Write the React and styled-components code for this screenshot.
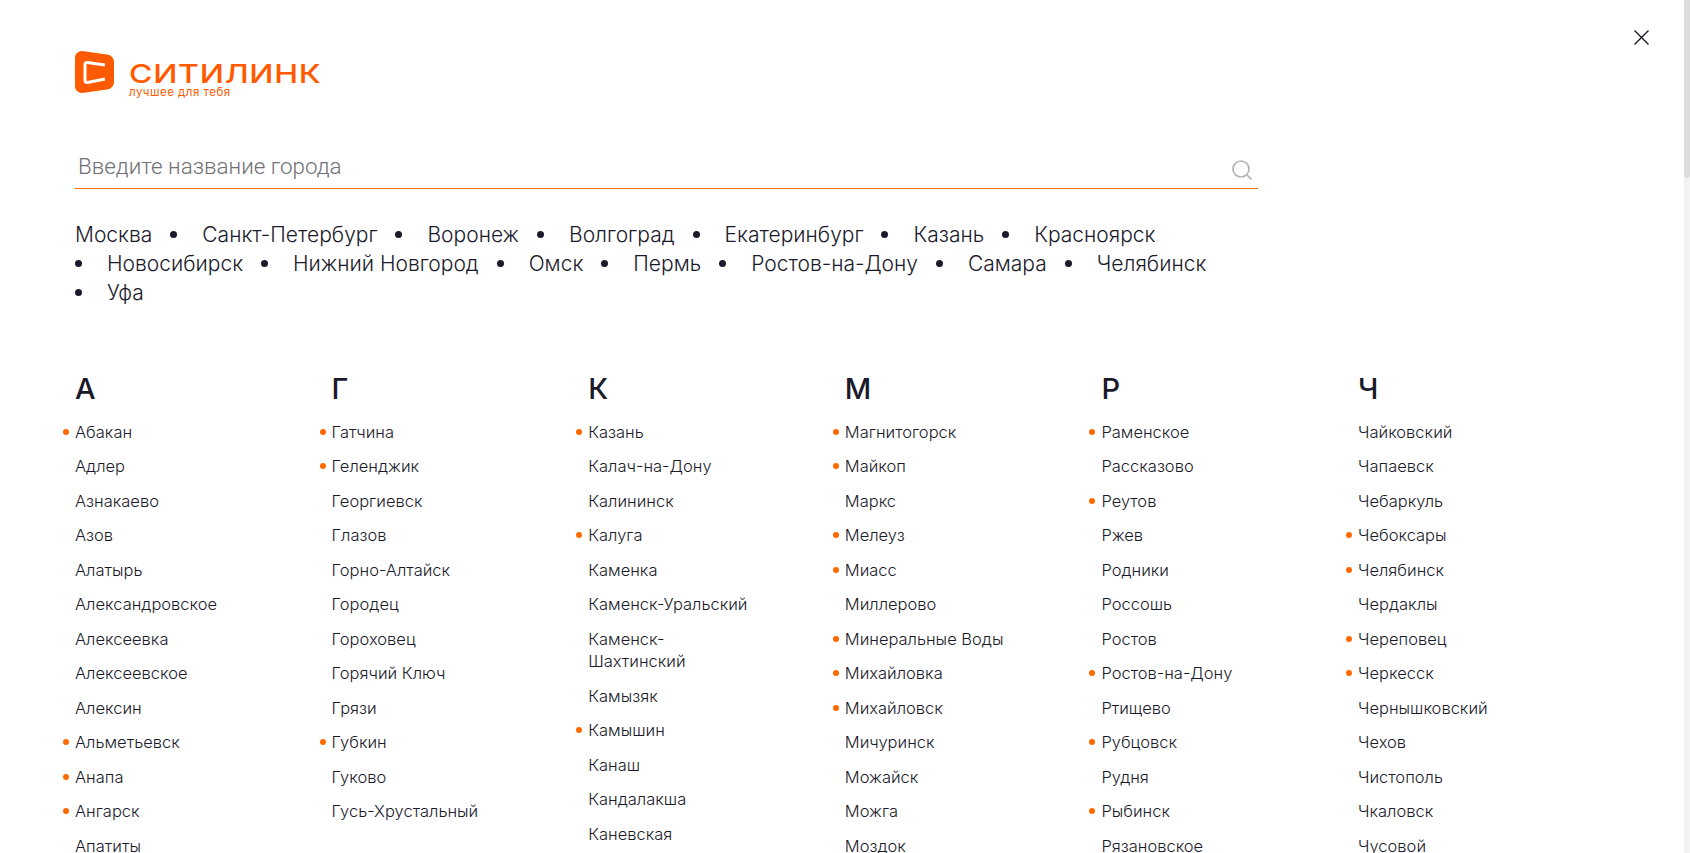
import React from "react";
import styled, { createGlobalStyle } from "styled-components";

const Global = createGlobalStyle`
  html { overflow: hidden; }
  body { margin: 0; background: #fff; color: #1a1a2b; font-family: Inter, "Noto Sans", sans-serif; font-weight: 300; }
`;

const Page = styled.div`
  position: relative;
  padding: 51px 0 0 75px;
  box-sizing: border-box;
`;
const ScrollTrack = styled.div`
  position: fixed;
  top: 0;
  right: 0;
  bottom: 0;
  width: 6px;
  background: #f3f3f3;
`;
const ScrollThumb = styled.div`
  height: 178px;
  border-radius: 0 0 3px 3px;
  background: #dcdcdc;
`;
const Close = styled.button`
  position: absolute;
  top: 30px;
  left: 1634px;
  width: 15px;
  height: 15px;
  padding: 0;
  border: 0;
  background: none;
  color: #1a1a2b;
  display: flex;
`;
const Logo = styled.div`
  display: flex;
  align-items: flex-start;
  gap: 15px;
  height: 42px;
  color: #ff5a00;
`;
const LogoWords = styled.div`
  display: flex;
  flex-direction: column;
  padding-top: 11px;
`;
const LogoName = styled.span`
  font-size: 26px;
  line-height: 24px;
  font-weight: 500;
  letter-spacing: 0.6px;
  transform: scaleX(1.23);
  transform-origin: left center;
  white-space: nowrap;
`;
const LogoTag = styled.span`
  font-size: 11.5px;
  line-height: 12px;
  font-weight: 400;
  letter-spacing: 0.5px;
  white-space: nowrap;
`;
const Search = styled.div`
  width: 1183px;
  height: 38px;
  margin-top: 57px;
  display: flex;
  align-items: center;
  justify-content: space-between;
  border-bottom: 1px solid #ff6a00;
`;
const SearchInput = styled.input`
  flex: 1;
  height: 38px;
  border: 0;
  outline: 0;
  padding: 0 0 6px 3px;
  background: none;
  font-family: Roboto, sans-serif;
  font-weight: 300;
  font-size: 22.4px;
  box-sizing: border-box;
  &::placeholder { color: #6f6f75; opacity: 1; }
`;
const SearchIcon = styled.svg`
  width: 22px;
  height: 22px;
  margin: 1px 5px 0 0;
  color: #b4b4b8;
`;
const Popular = styled.ul`
  width: 1183px;
  margin: 31px 0 0;
  padding: 0;
  list-style: none;
  display: flex;
  flex-wrap: wrap;
  column-gap: 18px;
  font-size: 21px;
  line-height: 29px;
`;
const PopularItem = styled.li`
  display: flex;
  align-items: center;
  white-space: nowrap;
  &:not(:first-child)::before {
    content: "";
    width: 7px;
    height: 7px;
    margin-right: 25px;
    border-radius: 50%;
    background: #1a1a2b;
  }
`;
const Columns = styled.div`
  display: grid;
  grid-template-columns: repeat(6, 256.6px);
  margin-top: 64px;
`;
const Column = styled.section``;
const Letter = styled.h2`
  margin: 0 0 13.6px;
  font-size: 29px;
  line-height: 36px;
  font-weight: 500;
`;
const Cities = styled.ul`
  width: 170px;
  margin: 0;
  padding: 0;
  list-style: none;
`;
const City = styled.li`
  position: relative;
  margin-bottom: 12px;
  font-size: 16.5px;
  line-height: 22.5px;
  &::before {
    content: "";
    display: ${(p) => (p.$major ? "block" : "none")};
    position: absolute;
    left: -12px;
    top: 8px;
    width: 6px;
    height: 6px;
    border-radius: 50%;
    background: #ff6a00;
  }
`;

const popular = ["Москва","Санкт-Петербург","Воронеж","Волгоград","Екатеринбург","Казань","Красноярск","Новосибирск","Нижний Новгород","Омск","Пермь","Ростов-на-Дону","Самара","Челябинск","Уфа"];

// A leading "*" marks a city with a store.
const columns = [
  ["А", ["*Абакан","Адлер","Азнакаево","Азов","Алатырь","Александровское","Алексеевка","Алексеевское","Алексин","*Альметьевск","*Анапа","*Ангарск","Апатиты"]],
  ["Г", ["*Гатчина","*Геленджик","Георгиевск","Глазов","Горно-Алтайск","Городец","Гороховец","Горячий Ключ","Грязи","*Губкин","Гуково","Гусь-Хрустальный"]],
  ["К", ["*Казань","Калач-на-Дону","Калининск","*Калуга","Каменка","Каменск-Уральский","Каменск-Шахтинский","Камызяк","*Камышин","Канаш","Кандалакша","Каневская"]],
  ["М", ["*Магнитогорск","*Майкоп","Маркс","*Мелеуз","*Миасс","Миллерово","*Минеральные Воды","*Михайловка","*Михайловск","Мичуринск","Можайск","Можга","Моздок"]],
  ["Р", ["*Раменское","Рассказово","*Реутов","Ржев","Родники","Россошь","Ростов","*Ростов-на-Дону","Ртищево","*Рубцовск","Рудня","*Рыбинск","Рязановское"]],
  ["Ч", ["Чайковский","Чапаевск","Чебаркуль","*Чебоксары","*Челябинск","Чердаклы","*Череповец","*Черкесск","Чернышковский","Чехов","Чистополь","Чкаловск","Чусовой"]],
];

export default function App() {
  return (
    <Page>
      <Global />
      <ScrollTrack><ScrollThumb /></ScrollTrack>
      <Close aria-label="Закрыть">
        <svg width="15" height="15" viewBox="0 0 15 15" fill="none" stroke="currentColor" strokeWidth="1.4">
          <path d="M.5.5l14 14M14.5.5l-14 14" />
        </svg>
      </Close>
      <Logo>
        <svg width="39" height="42" viewBox="0 0 39 42">
          <path fill="#ff5a00" d="M7 0 L32 3.5 C36 4 39 7 39 11 L39 31 C39 35 36 38 32 38.5 L7 42 C3 42 0 39 0 35 L0 7 C0 3 3 0 7 0 Z" />
          <path fill="none" stroke="#fff" strokeWidth="3" d="M30 14 L12.5 11.5 C11 11.3 10 12.2 10 13.6 L10 29.4 C10 30.8 11 31.7 12.5 31.5 L30 28" />
        </svg>
        <LogoWords>
          <LogoName>СИТИЛИНК</LogoName>
          <LogoTag>лучшее для тебя</LogoTag>
        </LogoWords>
      </Logo>
      <Search>
        <SearchInput placeholder="Введите название города" />
        <SearchIcon viewBox="0 0 22 22" fill="none" stroke="currentColor" strokeWidth="1.7">
          <circle cx="10" cy="10" r="8" />
          <path d="M16 16l4.5 4.5" />
        </SearchIcon>
      </Search>
      <Popular>
        {popular.map((c) => <PopularItem key={c}>{c}</PopularItem>)}
      </Popular>
      <Columns>
        {columns.map(([letter, cities]) => (
          <Column key={letter}>
            <Letter>{letter}</Letter>
            <Cities>
              {cities.map((c) => (
                <City key={c} $major={c.startsWith("*")}>{c.replace("*", "")}</City>
              ))}
            </Cities>
          </Column>
        ))}
      </Columns>
    </Page>
  );
}
